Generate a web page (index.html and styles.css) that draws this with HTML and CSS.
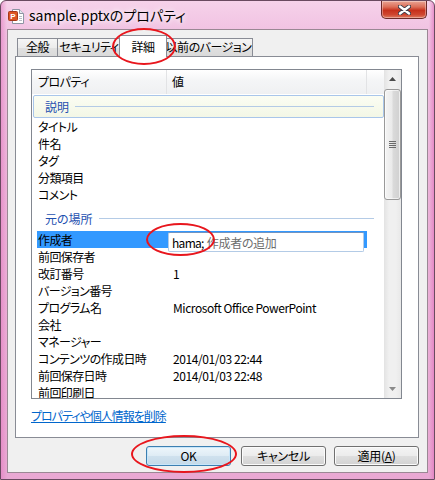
FILE: index.html
```html
<!DOCTYPE html>
<html lang="ja">
<head>
<meta charset="utf-8">
<title>sample.pptxのプロパティ</title>
<link rel="stylesheet" href="styles.css">
</head>
<body>
<div class="window">
  <div class="titlebar">
    <svg class="app-icon" width="16" height="16" viewBox="0 0 16 16">
      <path d="M4.5 1.5 H11.5 L15.5 5.5 V15.5 H4.5 Z" fill="#ffffff" stroke="#8d93a3"/>
      <path d="M11.5 1.5 V5.5 H15.5" fill="#e4e8ef" stroke="#8d93a3"/>
      <path d="M11 8.5h3M11 10.5h3M11 12.5h3" stroke="#b8bcc6"/>
      <rect x="0.5" y="3.5" width="9" height="9" rx="1" fill="#dc5424" stroke="#a8381a"/>
      <text x="5" y="11" font-size="8" font-weight="bold" fill="#ffffff" text-anchor="middle" font-family="Liberation Sans, sans-serif">P</text>
    </svg>
    <span class="title">sample.pptxのプロパティ</span>
    <div class="close">
      <svg width="13" height="10" viewBox="0 0 13 10">
        <path d="M2 1.5 L11 8.5 M11 1.5 L2 8.5" stroke="#3b3b48" stroke-width="4.2" stroke-linecap="round"/>
        <path d="M2 1.5 L11 8.5 M11 1.5 L2 8.5" stroke="#ffffff" stroke-width="2.4" stroke-linecap="round"/>
      </svg>
    </div>
  </div>

  <div class="client">
    <div class="tabs">
      <div class="tab t1">全般</div>
      <div class="tab t2">セキュリティ</div>
      <div class="tab active">詳細</div>
      <div class="tab t4">以前のバージョン</div>
    </div>

    <div class="panel">
      <div class="listbox">
        <div class="list">
          <div class="header">
            <div class="hcol hname">プロパティ</div>
            <div class="hcol hvalue">値</div>
            <div class="hcol hrest"></div>
          </div>

          <div class="group focused"><span class="gtext">説明</span><i class="gline"></i></div>
          <div class="row"><span class="name">タイトル</span><span class="value"></span></div>
          <div class="row"><span class="name">件名</span><span class="value"></span></div>
          <div class="row"><span class="name">タグ</span><span class="value"></span></div>
          <div class="row"><span class="name">分類項目</span><span class="value"></span></div>
          <div class="row"><span class="name">コメント</span><span class="value"></span></div>

          <div class="group second"><span class="gtext">元の場所</span><i class="gline"></i></div>
          <div class="row selected">
            <span class="name">作成者</span><span class="value"></span>
            <div class="editbox"><span class="typed">hama;</span><span class="hint">作成者の追加</span></div>
          </div>
          <div class="row"><span class="name">前回保存者</span><span class="value"></span></div>
          <div class="row"><span class="name">改訂番号</span><span class="value">1</span></div>
          <div class="row"><span class="name">バージョン番号</span><span class="value"></span></div>
          <div class="row"><span class="name">プログラム名</span><span class="value latin">Microsoft Office PowerPoint</span></div>
          <div class="row"><span class="name">会社</span><span class="value"></span></div>
          <div class="row"><span class="name">マネージャー</span><span class="value"></span></div>
          <div class="row"><span class="name">コンテンツの作成日時</span><span class="value date">2014/01/03 22:44</span></div>
          <div class="row"><span class="name">前回保存日時</span><span class="value date">2014/01/03 22:48</span></div>
          <div class="row"><span class="name">前回印刷日</span><span class="value"></span></div>
        </div>

        <div class="scrollbar">
          <div class="sb-btn">
            <svg width="7" height="4" viewBox="0 0 7 4"><path d="M3.5 0 L7 4 H0 Z" fill="#4a4a4a"/></svg>
          </div>
          <div class="sb-thumb">
            <div class="grip"><i></i><i></i><i></i><i></i></div>
          </div>
          <div class="sb-track"></div>
          <div class="sb-btn">
            <svg width="7" height="4" viewBox="0 0 7 4"><path d="M0 0 H7 L3.5 4 Z" fill="#8a8a8a"/></svg>
          </div>
        </div>
      </div>

      <a class="link" href="#">プロパティや個人情報を削除</a>
    </div>

    <div class="buttons">
      <div class="btn default">OK</div>
      <div class="btn">キャンセル</div>
      <div class="btn apply">適用(<u>A</u>)</div>
    </div>
  </div>

  <div class="ring ring-tab"></div>
  <div class="ring ring-author"></div>
  <div class="ring ring-ok"></div>
</div>
</body>
</html>
```

FILE: styles.css
```css
html, body {
  margin: 0;
  padding: 0;
}

body {
  width: 435px;
  height: 480px;
  overflow: hidden;
  font-family: "Noto Sans CJK JP", "Noto Sans", sans-serif;
  font-size: 12px;
  font-feature-settings: "palt";
  color: #000;
  background: #ffffff;
}

.window {
  position: relative;
  width: 435px;
  height: 480px;
  box-sizing: border-box;
  border: 1px solid #6a4a60;
  border-radius: 6px 6px 0 0;
  background:
    linear-gradient(90deg, rgba(226,120,190,0.55) 0, rgba(226,120,190,0) 6px, rgba(226,120,190,0) 428px, rgba(226,120,190,0.7) 433px),
    linear-gradient(180deg, #f6d2ea 0%, #f0c0e1 7%, #ecb3d9 40%, #e9a8d3 100%);
  display: flex;
  flex-direction: column;
}

/* ---------- title bar ---------- */
.titlebar {
  height: 28px;
  display: flex;
  align-items: flex-start;
  padding-left: 7px;
}

.app-icon {
  margin-top: 7px;
  flex: none;
}

.title {
  margin-left: 5px;
  margin-top: 4px;
  font-size: 14px;
  line-height: 20px;
  color: #000;
  text-shadow: 0 0 5px #fff, 0 0 8px #fff;
}

.close {
  margin-left: auto;
  margin-right: 7px;
  width: 46px;
  height: 18px;
  box-sizing: border-box;
  border: 1px solid #6b2a2a;
  border-top: none;
  border-radius: 0 0 5px 5px;
  background: linear-gradient(180deg, #eaa494 0%, #dc6e58 35%, #c6301c 55%, #cf4630 80%, #df7a62 100%);
  box-shadow: inset 0 0 0 1px rgba(255,255,255,0.35);
  display: flex;
  align-items: center;
  justify-content: center;
}

/* ---------- client area ---------- */
.client {
  flex: 1;
  margin: 0 6px 6px 6px;
  background: #f0f0f0;
  border: 1px solid #9a8894;
  display: flex;
  flex-direction: column;
}

.tabs {
  display: flex;
  align-items: flex-end;
  height: 21px;
  margin: 5px 0 0 9px;
}

.tab {
  box-sizing: border-box;
  height: 18px;
  line-height: 16px;
  text-align: center;
  white-space: nowrap;
  letter-spacing: -0.5px;
  border: 1px solid #898c95;
  border-bottom: none;
  background: linear-gradient(180deg, #f5f5f5 0%, #ececec 50%, #e0e0e0 51%, #dadada 100%);
  font-size: 12px;
}

.tab.t1 { width: 41px; }
.tab.t2 { width: 63px; border-left: none; }
.tab.t4 { width: 88px; border-left: none; }

.tab.active {
  position: relative;
  z-index: 2;
  width: 48px;
  height: 22px;
  line-height: 21px;
  margin: 0 -2px -1px -2px;
  background: #ffffff;
}

.panel {
  height: 382px;
  box-sizing: border-box;
  margin: 0 8px 0 7px;
  border: 1px solid #898c95;
  background: #ffffff;
  padding: 12px 0 0 15px;
  display: flex;
  flex-direction: column;
  align-items: flex-start;
}

/* ---------- list box ---------- */
.listbox {
  width: 371px;
  height: 330px;
  box-sizing: border-box;
  border: 1px solid #828790;
  display: flex;
  overflow: hidden;
}

.list {
  width: 352px;
  overflow: hidden;
}

.header {
  display: flex;
  height: 24px;
  background: linear-gradient(180deg, #ffffff 0%, #f5f6f7 40%, #eff0f2 100%);
}

.hcol {
  box-sizing: border-box;
  line-height: 24px;
  height: 24px;
  letter-spacing: -0.5px;
}

.hname {
  width: 135px;
  padding-left: 6px;
  border-right: 1px solid #e2e3e5;
}

.hvalue {
  width: 200px;
  padding-left: 5px;
  border-right: 1px solid #e2e3e5;
}

.hrest {
  flex: 1;
}

.group {
  display: flex;
  align-items: center;
  height: 23px;
  box-sizing: border-box;
  margin: 1px 0 0 1px;
  padding: 0 10px 0 12px;
}

.group.focused {
  border: 1px solid #a9c6ea;
  border-radius: 2px;
  background: linear-gradient(180deg, #fbfdf3 0%, #f3f7e6 100%);
  padding-left: 11px;
  padding-right: 9px;
}

.group.second {
  margin: 4px 0 1px 1px;
}

.gtext {
  color: #1e4fb0;
  line-height: 17px;
}

.gline {
  flex: 1;
  height: 1px;
  margin-left: 6px;
  background: #b4cbe6;
}

.row {
  position: relative;
  display: flex;
  width: 330px;
  height: 17px;
  box-sizing: border-box;
  margin-left: 5px;
  padding-left: 1px;
  line-height: 17px;
  white-space: nowrap;
}

.row .name {
  width: 135px;
  flex: none;
  letter-spacing: -0.6px;
}

.row .value {
  flex: 1;
}

.row .latin {
  letter-spacing: -0.45px;
}

.row .date {
  letter-spacing: -0.4px;
}

.row.selected {
  background: #3399ff;
}

.editbox {
  position: absolute;
  left: 131px;
  top: 1px;
  width: 196px;
  height: 20px;
  box-sizing: border-box;
  border: 1px solid #b3cbe6;
  border-top-color: #7394bf;
  border-radius: 2px;
  background: #ffffff;
  padding: 1px 0 0 3px;
  line-height: 17px;
  white-space: nowrap;
}

.editbox .typed {
  color: #000;
  margin-right: 3px;
  letter-spacing: -0.7px;
}

.editbox .hint {
  color: #6d6d6d;
  letter-spacing: -0.3px;
}

/* ---------- scrollbar ---------- */
.scrollbar {
  width: 17px;
  display: flex;
  flex-direction: column;
  background: linear-gradient(90deg, #e3e3e3 0%, #f0f0f0 30%, #f0f0f0 70%, #e8e8e8 100%);
}

.sb-btn {
  height: 18px;
  flex: none;
  display: flex;
  align-items: center;
  justify-content: center;
}

.sb-thumb {
  height: 111px;
  flex: none;
  margin: 1px 0 0 0;
  box-sizing: border-box;
  border: 1px solid #999999;
  border-radius: 3px;
  background: linear-gradient(90deg, #f4f4f4 0%, #ebebeb 45%, #dadada 55%, #d0d0d0 100%);
  box-shadow: inset 0 0 0 1px rgba(255,255,255,0.6);
  display: flex;
  align-items: center;
  justify-content: center;
}

.grip {
  display: flex;
  flex-direction: column;
  gap: 1px;
}

.grip i {
  display: block;
  width: 7px;
  height: 1px;
  background: #6b6b6b;
}

.sb-track {
  flex: 1;
}

/* ---------- link ---------- */
.link {
  margin-top: 8px;
  line-height: 17px;
  color: #0066cc;
  text-decoration: underline;
  font-size: 12px;
  letter-spacing: -1px;
}

/* ---------- buttons ---------- */
.buttons {
  display: flex;
  justify-content: flex-end;
  gap: 10px;
  margin: 8px 8px 0 0;
}

.btn {
  width: 85px;
  height: 20px;
  box-sizing: border-box;
  border: 1px solid #707070;
  border-radius: 3px;
  background: linear-gradient(180deg, #f4f4f4 0%, #ececec 48%, #dedede 52%, #d2d2d2 100%);
  box-shadow: inset 0 0 0 1px #fbfbfb;
  text-align: center;
  line-height: 18px;
  font-size: 12px;
  letter-spacing: -0.3px;
}

.btn.apply {
  margin-left: -2px;
}

.btn.default {
  border-color: #3c7fb1;
  background: linear-gradient(180deg, #eef6fb 0%, #dfecf5 48%, #cfe1ee 52%, #c4d9e8 100%);
  box-shadow: inset 0 0 0 1px #c8e6fa;
}

/* ---------- red annotation rings ---------- */
.ring {
  position: absolute;
  box-sizing: border-box;
  border: 2.5px solid #e8161d;
  border-radius: 50%;
  pointer-events: none;
  z-index: 5;
}

.ring-tab {
  left: 111px;
  top: 27px;
  width: 64px;
  height: 37px;
}

.ring-author {
  left: 145px;
  top: 222px;
  width: 69px;
  height: 33px;
}

.ring-ok {
  left: 130px;
  top: 434px;
  width: 106px;
  height: 38px;
}
```
